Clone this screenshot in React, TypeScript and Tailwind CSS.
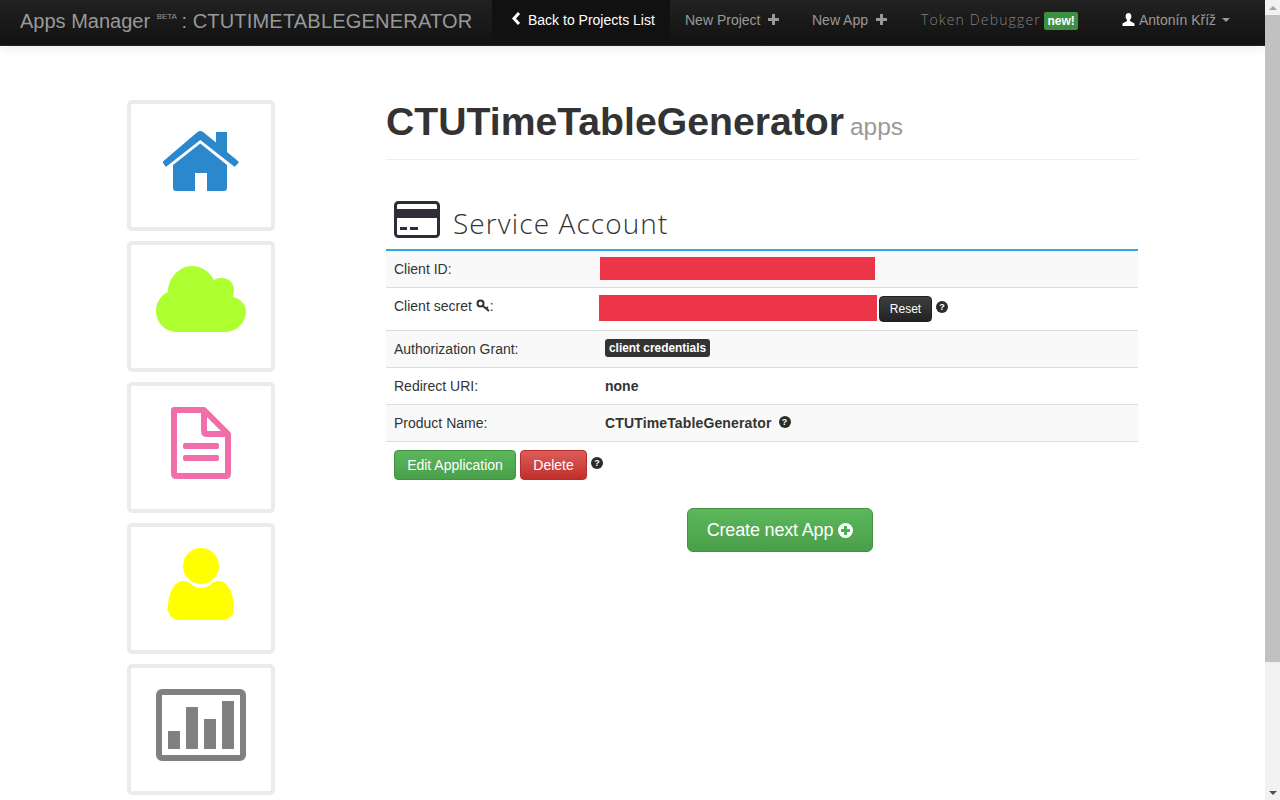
import React from "react";

const sans = "font-['Liberation_Sans',Arial,sans-serif]";

function Help({ className = "" }: { className?: string }) {
  return (
    <span className={`inline-flex w-3 h-3 rounded-full bg-[#2b2b2b] text-white text-[9px] leading-3 font-bold justify-center ${className}`}>?</span>
  );
}

function Plus({ color = "#999" }: { color?: string }) {
  return (
    <svg width="11" height="11" viewBox="0 0 11 11" className="block">
      <path d="M4 0h3v4h4v3H7v4H4V7H0V4h4z" fill={color} />
    </svg>
  );
}

function Tile({ children }: { children: React.ReactNode }) {
  return (
    <div className="w-[148px] h-[131px] border-4 border-[#ebebeb] rounded-[5px] flex items-start justify-center bg-white">
      {children}
    </div>
  );
}

function Row({ label, children, odd, h }: { label: React.ReactNode; children: React.ReactNode; odd?: boolean; h: string }) {
  return (
    <div className={`flex ${h} border-b border-[#dddddd] text-[14px] text-[#333333] ${odd ? "bg-[#f9f9f9]" : "bg-white"}`}>
      <div className="w-[211px] pl-2 pt-2 leading-5 shrink-0">{label}</div>
      <div className="flex-1 flex items-start">{children}</div>
    </div>
  );
}

export default function App() {
  return (
    <div className={`flex w-[1280px] h-[800px] overflow-hidden bg-white ${sans}`}>
      <div className="w-[1265px] shrink-0 flex flex-col">
        <nav className="h-[46px] shrink-0 flex items-stretch bg-gradient-to-b from-[#222222] to-[#111111] border-b border-[#252525] shadow-[0_1px_10px_rgba(0,0,0,0.1)]">
          <div className="w-[492px] shrink-0 pl-5 pt-[9px] text-[20px] leading-6 text-[#999999] whitespace-nowrap">
            Apps Manager <sup className="text-[8px] relative -top-[9px] align-baseline ml-[1px] -mr-[1px]">BETA</sup> : <span className="tracking-[0.2px]">CTUTIMETABLEGENERATOR</span>
          </div>
          <div className="w-[178px] shrink-0 bg-[#111111] text-white text-[14px] pl-[19px] pt-[10px] leading-5 flex items-start whitespace-nowrap">
            <svg width="10" height="13" viewBox="0 0 10 13" className="mr-[7px] mt-[2px]">
              <path d="M8 1L3 6.5L8 12" stroke="#fff" strokeWidth="3" fill="none" />
            </svg>
            Back to Projects List
          </div>
          <div className="w-[127px] shrink-0 text-[14px] text-[#999999] pl-[15px] pt-[10px] leading-5 whitespace-nowrap flex items-start">
            New Project <span className="ml-[8px] mt-[4px]"><Plus /></span>
          </div>
          <div className="w-[108px] shrink-0 text-[14px] text-[#999999] pl-[15px] pt-[10px] leading-5 whitespace-nowrap flex items-start">
            New App <span className="ml-[8px] mt-[4px]"><Plus /></span>
          </div>
          <div className="w-[217px] shrink-0 pl-[16px] pt-[10px] leading-5 whitespace-nowrap flex items-start">
            <span className="font-['Open_Sans',sans-serif] font-light text-[14px] tracking-[1.15px] text-[#808080]">Token Debugger</span>
            <span className="ml-[3px] mt-[2px] bg-[#3f8f42] text-white font-bold text-[12px] leading-[18px] h-[18px] px-[3.500px] rounded-[2px]">new!</span>
          </div>
          <div className="flex-1 text-[14px] text-[#999999] pt-[10px] leading-5 whitespace-nowrap flex items-start">
            <svg width="13" height="13" viewBox="0 0 13 13" className="mt-[3px] mr-[4px]">
              <path d="M6.5 0C8.3 0 9.4 1.4 9.4 3.4C9.4 5 8.6 6.2 8 6.8V8L12.5 10.5V13H0.5V10.5L5 8V6.8C4.4 6.2 3.6 5 3.6 3.4C3.6 1.4 4.7 0 6.5 0Z" fill="#fff" />
            </svg>
            Antonín Kříž
            <span className="ml-[6px] mt-[8px] w-0 h-0 border-x-4 border-x-transparent border-t-4 border-t-[#999999]" />
          </div>
        </nav>

        <div className="flex flex-1 min-h-0 overflow-hidden">
          <aside className="w-[259px] pl-[127px] pt-[54px] shrink-0 flex flex-col gap-[10px]">
            <Tile>
              <svg width="76" height="60" viewBox="0 0 76 60" style={{ marginTop: 27 }}>
                <path d="M37.3 0C38.3 0 39.300 .4 40.100 1L53 11.500V1H64V21L75 30C75.800 30.800 75.800 31.600 75 32.500L72.500 35C71.700 35.800 71 35.600 70.500 35L37.300 9L4.100 35C3.600 35.600 2.900 35.800 2.100 35L.5 32.500C-.3 31.600 -.3 30.800 .5 30L34.500 1C35.300 .4 36.300 0 37.300 0Z" fill="#2b88cc" />
                <path d="M37.300 12.500L64 34V57C64 58.700 62.700 60 61 60H44V42H32V60H13C11.300 60 10 58.700 10 57V34Z" fill="#2b88cc" />
              </svg>
            </Tile>
            <Tile>
              <svg width="90" height="66" viewBox="0 0 90 66" className="-ml-[1px]" style={{ marginTop: 21 }}>
                <path d="M21 66C9.400 66 0 56.600 0 45C0 36.500 5 29 12 26C12 11.600 23.600 0 36 0C45 0 53 5 58 14C60 12.500 63 12 66 12C73.700 12 78 18 78 24C78 25.500 77.500 27 77 31C84.500 33 90 38.500 90 45C90 56.600 80.600 66 69 66Z" fill="#adff2f" />
              </svg>
            </Tile>
            <Tile>
              <svg width="60" height="72" viewBox="0 0 60 72" className="-ml-[1px]" style={{ marginTop: 21 }}>
                <path d="M3 3H33L57 27V66C57 67.700 56.700 69 55 69H5C3.300 69 3 67.700 3 66Z" fill="none" stroke="#f06ea9" strokeWidth="6" strokeLinejoin="round" />
                <path d="M33 3V24C33 26.500 34 27 36 27H57" fill="none" stroke="#f06ea9" strokeWidth="6" strokeLinejoin="round" />
                <rect x="12" y="36" width="36" height="6" rx="2" fill="#f06ea9" />
                <rect x="12" y="48" width="36" height="6" rx="2" fill="#f06ea9" />
              </svg>
            </Tile>
            <Tile>
              <svg width="66" height="72" viewBox="0 0 66 72" style={{ marginTop: 21 }}>
                <circle cx="33" cy="18" r="18" fill="#ffff00" />
                <path d="M15 33C18 33 21 34 24 37C27 39 30 40 33 40C36 40 39 39 42 37C45 34 48 33 51 33C60 33 66 46 66 60C66 67 62 72 54 72H12C4 72 0 67 0 60C0 46 6 33 15 33Z" fill="#ffff00" />
              </svg>
            </Tile>
            <Tile>
              <svg width="90" height="72" viewBox="0 0 90 72" className="-ml-[1px]" style={{ marginTop: 21 }}>
                <rect x="3" y="3" width="84" height="66" rx="3" fill="none" stroke="#808080" strokeWidth="6" />
                <rect x="12" y="42" width="12" height="18" fill="#808080" />
                <rect x="30" y="18" width="12" height="42" fill="#808080" />
                <rect x="48" y="30" width="12" height="30" fill="#808080" />
                <rect x="66" y="12" width="12" height="48" fill="#808080" />
              </svg>
            </Tile>
          </aside>

          <main className="w-[752px] ml-[127px] shrink-0 min-w-0">
            <div className="h-[114px] border-b border-[#eeeeee] pt-[51px] whitespace-nowrap">
              <h1 className="text-[39.200px] leading-[50px] font-bold text-[#333333]">
                CTUTimeTableGenerator <small className="text-[24.500px] font-normal text-[#999999] -ml-[5px]">apps</small>
              </h1>
            </div>
            <div className="h-[91px] flex items-start pl-2 pt-[41px] border-b-2 border-[#2fa8e3]">
              <svg width="46" height="37" viewBox="0 0 46 37" className="shrink-0">
                <rect x="1.500" y="1.500" width="43" height="34" rx="3" fill="none" stroke="#302b36" strokeWidth="3" />
                <rect x="2" y="8" width="42" height="9" fill="#302b36" />
                <rect x="6" y="26" width="7" height="3" fill="#302b36" />
                <rect x="16" y="26" width="8" height="3" fill="#302b36" />
              </svg>
              <span className="ml-[13px] mt-[3px] font-['Open_Sans',sans-serif] font-light text-[28px] leading-[38px] tracking-[1.100px] text-[#333333] whitespace-nowrap">
                Service Account
              </span>
            </div>

            <Row odd h="h-[37px]" label="Client ID:">
              <div className="ml-[3px] mt-[6px] w-[275px] h-[23px] bg-[#ec3548]" />
            </Row>
            <Row h="h-[43px]" label={
              <span className="inline-flex items-start">
                Client secret
                <svg width="14" height="14" viewBox="0 0 14 14" className="ml-[4px] mt-[3px]">
                  <circle cx="4.500" cy="4.500" r="3" fill="none" stroke="#333" strokeWidth="2" />
                  <path d="M7 7L13 12M10 9.500L12 8" stroke="#333" strokeWidth="2" fill="none" />
                </svg>
                :
              </span>
            }>
              <div className="ml-[2px] mt-[7px] w-[278px] h-[26px] bg-[#ec3548]" />
              <button className="ml-[2px] mt-[8px] w-[53px] h-[26px] rounded-[4px] bg-gradient-to-b from-[#3f3f3f] to-[#222222] border border-[#222222] text-white text-[12px]">Reset</button>
              <Help className="ml-[4px] mt-[13px]" />
            </Row>
            <Row odd h="h-[37px]" label="Authorization Grant:">
              <span className="ml-[8px] mt-[8px] h-[18px] leading-[18px] px-[4px] rounded-[3px] bg-[#333333] text-white text-[11.900px] font-bold whitespace-nowrap">client credentials</span>
            </Row>
            <Row h="h-[37px]" label="Redirect URI:">
              <span className="ml-[8px] mt-[8px] font-bold leading-5">none</span>
            </Row>
            <Row odd h="h-[37px]" label="Product Name:">
              <span className="ml-[8px] mt-[8px] font-bold leading-5 tracking-[0.14px]">CTUTimeTableGenerator</span>
              <Help className="ml-[7px] mt-[11px]" />
            </Row>

            <div className="flex items-start pl-2 pt-2 h-[66px]">
              <button className="w-[122px] h-[30px] rounded-[4px] bg-gradient-to-b from-[#5cb85c] to-[#4a9f4a] border border-[#43913f] text-white text-[14px]">Edit Application</button>
              <button className="ml-1 w-[67px] h-[30px] rounded-[4px] bg-gradient-to-b from-[#dc5c58] to-[#c12e2a] border border-[#b92c28] text-white text-[14px]">Delete</button>
              <Help className="ml-1 mt-[7px]" />
            </div>

            <div className="flex justify-center pl-[36px]">
              <button className="w-[186px] h-[44px] rounded-[6px] bg-gradient-to-b from-[#5cb85c] to-[#4a9f4a] border border-[#43913f] text-white text-[18px] tracking-[-0.17px] flex items-center justify-center">
                Create next App
                <svg width="15" height="15" viewBox="0 0 15 15" className="ml-[5px]">
                  <circle cx="7.500" cy="7.500" r="7.500" fill="#fff" />
                  <path d="M6 3h3v3h3v3H9v3H6V9H3V6h3z" fill="#4cae4c" />
                </svg>
              </button>
            </div>
          </main>
        </div>
      </div>

      <div className="w-[15px] h-[800px] shrink-0 bg-[#f1f1f1] flex flex-col items-center relative">
        <div className="h-[15px] flex items-center justify-center">
          <span className="w-0 h-0 border-x-[4px] border-x-transparent border-b-[4px] border-b-[#a3a3a3]" />
        </div>
        <div className="w-[15px] h-[647px] bg-[#c1c1c1]" />
        <div className="flex-1" />
        <div className="h-[15px] flex items-center justify-center">
          <span className="w-0 h-0 border-x-[4px] border-x-transparent border-t-[4px] border-t-[#505050]" />
        </div>
      </div>
    </div>
  );
}
